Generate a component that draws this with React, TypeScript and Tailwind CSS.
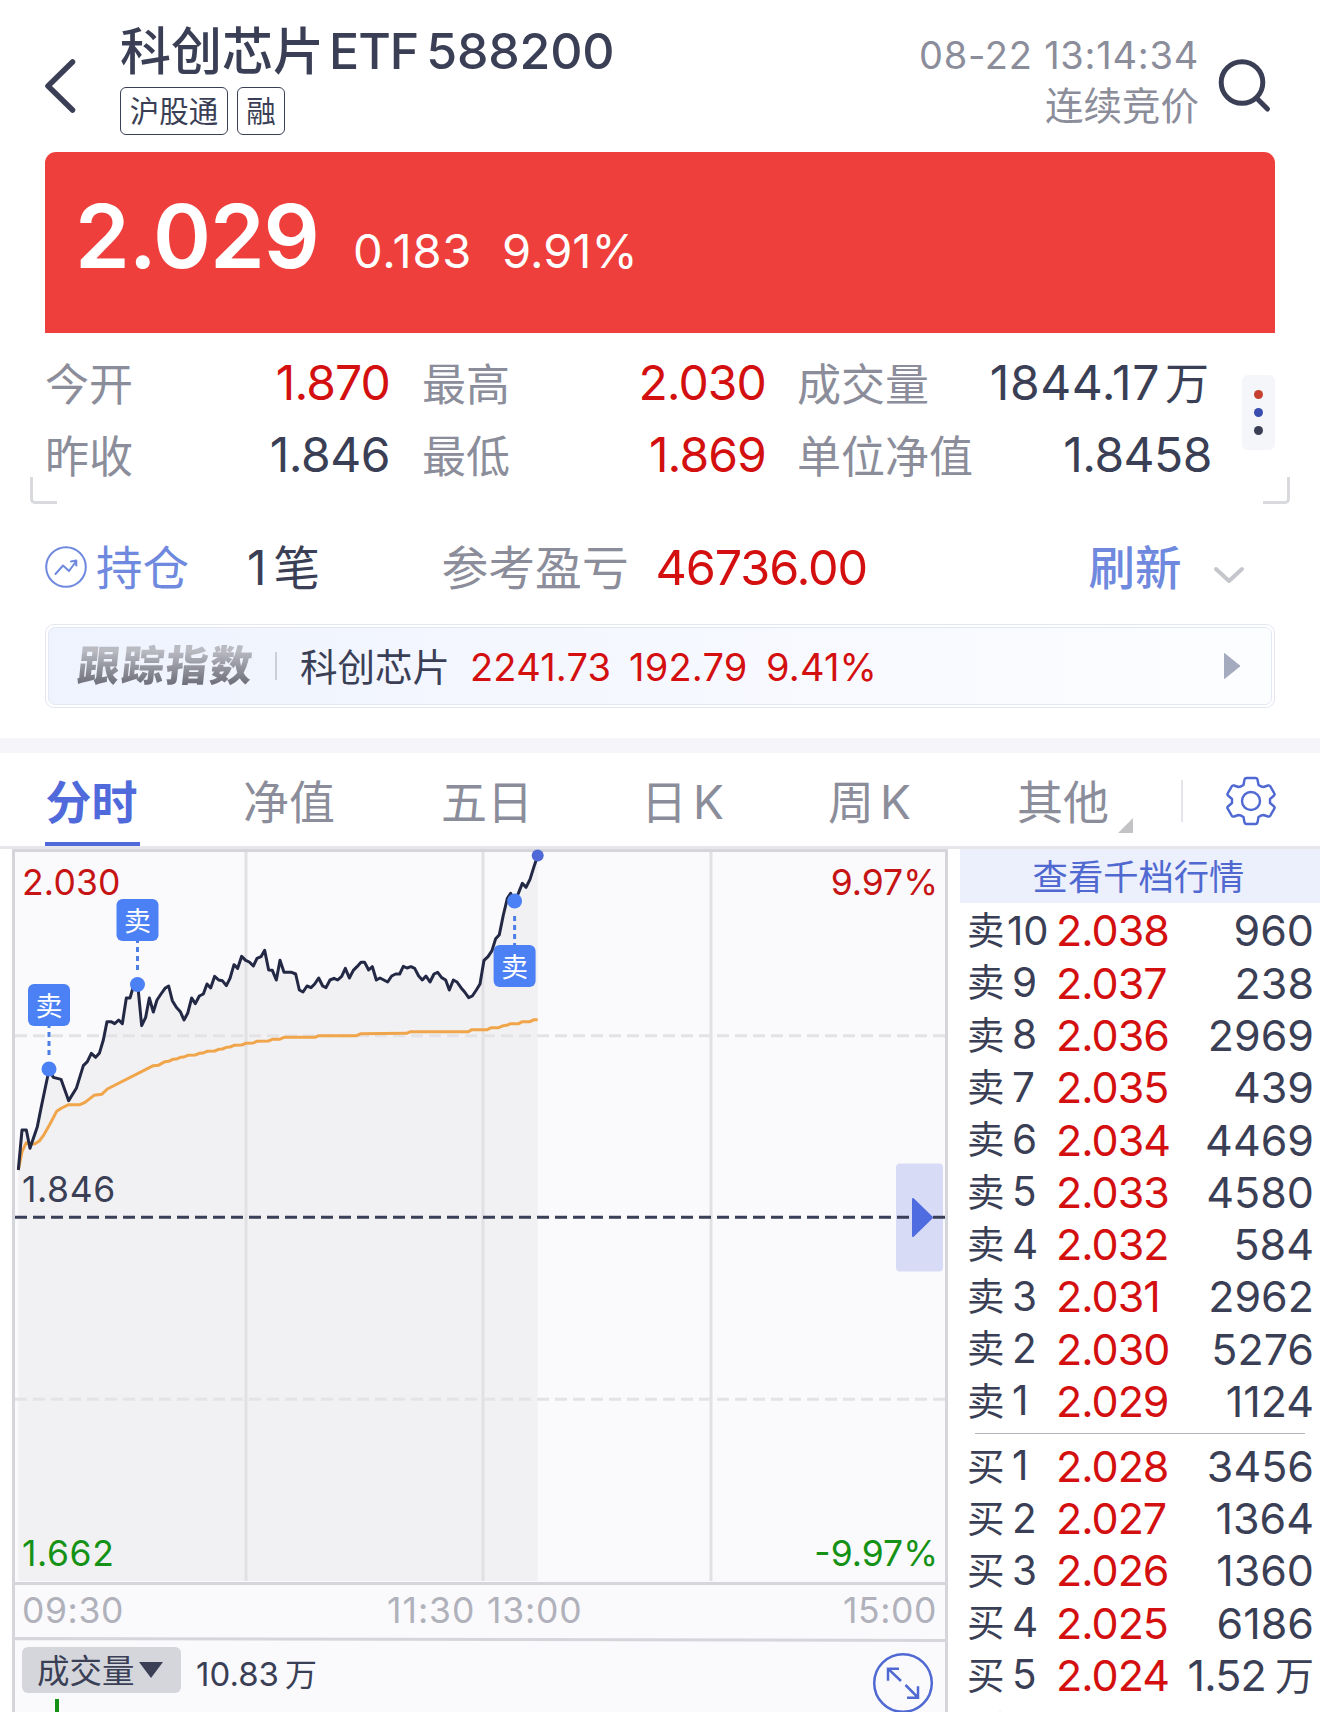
const TABS = [
  { label: "净值", className: "w-[198px]" },
  { label: "五日", className: "w-[200px]" },
  { label: "日 K", className: "w-[187px]" },
  { label: "周 K", className: "w-[189px]" },
];

const ASKS = [
  ["10", "2.038", "960"],
  ["9", "2.037", "238"],
  ["8", "2.036", "2969"],
  ["7", "2.035", "439"],
  ["6", "2.034", "4469"],
  ["5", "2.033", "4580"],
  ["4", "2.032", "584"],
  ["3", "2.031", "2962"],
  ["2", "2.030", "5276"],
  ["1", "2.029", "1124"],
];

const BIDS = [
  ["1", "2.028", "3456"],
  ["2", "2.027", "1364"],
  ["3", "2.026", "1360"],
  ["4", "2.025", "6186"],
  ["5", "2.024", "1.52 万"],
  ["6", "2.023", "1840"],
];

// chart series, three units per pixel
const PRICE_LINE =
  "55,990 66,870 79,870 90,925 112,860 124,800 147,690 160,712 183,718 206,782 229,745 250,677 262,665 274,640 287,652 298,640 310,600 321,545 333,545 344,551 356,540 367,551 379,474 390,474 400,440 413,432 425,557 437,532 448,474 460,516 471,480 483,462 495,445 506,438 517,482 529,502 541,515 552,540 563,520 575,474 586,491 598,468 610,462 621,432 632,444 644,409 656,420 667,422 679,437 690,415 702,374 713,385 725,349 737,361 748,366 760,378 771,355 783,350 794,331 806,390 817,391 829,420 840,361 852,397 875,397 887,402 898,450 909,456 921,438 933,443 944,432 956,414 968,438 978,443 990,420 1002,415 1013,420 1025,409 1036,385 1048,414 1060,391 1071,380 1083,367 1094,367 1106,390 1117,380 1129,420 1140,414 1163,426 1175,408 1187,402 1199,402 1210,379 1221,384 1233,380 1244,385 1256,408 1267,420 1278,408 1290,426 1302,402 1313,397 1325,413 1337,420 1348,450 1360,420 1371,426 1383,443 1394,456 1406,473 1417,468 1429,450 1440,432 1452,361 1464,350 1476,332 1487,296 1498,284 1510,225 1522,175 1532,160 1544,183 1555,160 1567,130 1578,142 1590,118 1602,80 1613,47";

const AVERAGE_LINE =
  "55,990 66,935 79,908 90,912 105,911 118,903 130,887 150,852 170,814 185,804 206,794 240,794 255,787 282,766 305,763 322,747 460,677 475,676 495,665 506,664 518,658 530,657 541,652 552,651 563,646 586,645 598,640 610,639 621,634 644,633 656,628 667,627 679,622 690,621 702,616 725,615 737,610 760,609 770,604 805,603 817,598 838,598 852,592 945,592 956,587 1070,587 1083,581 1220,580 1232,575 1405,575 1416,569 1462,569 1474,563 1496,563 1510,557 1520,556 1532,551 1556,551 1567,545 1590,545 1602,539 1613,539";

export default function App() {
  return (
    <main className="flex h-[1712px] w-[1320px] flex-col overflow-hidden bg-white font-['Inter','Noto_Sans_CJK_SC',sans-serif] text-[#3a3f56]">
      <Header />
      <PriceBanner />
      <Stats />
      <Position />
      <IndexBar />
      <div className="mt-[30px] h-[15px] shrink-0 bg-[#f5f5fa]" />
      <Tabs />
      <div className="flex h-[863px] shrink-0">
        <Chart />
        <OrderBook />
      </div>
    </main>
  );
}

function Header() {
  return (
    <header className="flex h-[152px] shrink-0">
      <svg
        viewBox="0 0 40 60"
        fill="none"
        aria-hidden="true"
        className="mt-[56px] ml-[40px] h-[60px] w-[40px]"
      >
        <path
          d="M32.5 6 8 30l24.5 24"
          stroke="#3a3f56"
          strokeWidth="5.5"
          strokeLinecap="round"
          strokeLinejoin="round"
        />
      </svg>
      <div className="ml-[40px] w-[760px]">
        <h1 className="mt-[21px] flex h-[60px] items-center text-[50px] leading-[60px] font-medium whitespace-nowrap">
          <span className="pt-[2px] text-[51px]">科创芯片</span>
          <span className="ml-[5px] tracking-[-1px]">ETF</span>
          <span className="ml-[8px] tracking-[-0.2px]">588200</span>
        </h1>
        <div className="mt-[6px] flex gap-[9px] text-[29.5px] leading-[47px]">
          <span className="h-[48px] w-[108px] rounded-[6px] border-[1.5px] border-[#3a3f56] text-center">
            沪股通
          </span>
          <span className="h-[48px] w-[48px] rounded-[6px] border-[1.5px] border-[#3a3f56] text-center">
            融
          </span>
        </div>
      </div>
      <div className="flex w-[319px] flex-col items-end text-[#8b8d9a]">
        <span className="mt-[30px] text-[38px] leading-[50px] tracking-[0.75px] whitespace-nowrap">
          08-22 13:14:34
        </span>
        <span className="mt-px text-[38.500px] leading-[50px]">连续竞价</span>
      </div>
      <svg
        viewBox="0 0 60 60"
        fill="none"
        aria-hidden="true"
        className="mt-[56px] ml-[16px] size-[60px]"
      >
        <g stroke="#3a3f56" strokeWidth="5" strokeLinecap="round">
          <circle cx="27" cy="26.500" r="20.800" />
          <path d="m41.500 42 11 11" />
        </g>
      </svg>
    </header>
  );
}

function PriceBanner() {
  return (
    <section className="mx-[45px] flex h-[181px] shrink-0 items-baseline rounded-t-[11px] bg-[#ee3f3c] pt-[30px] pl-[30px] text-[47px] whitespace-nowrap text-white">
      <span className="w-[278px] text-[88px] leading-[108px] font-semibold tracking-[-1.2px]">
        2.029
      </span>
      <span className="w-[149px] tracking-[0.8px]">0.183</span>
      <span>9.91%</span>
    </section>
  );
}

function Stat({
  label,
  value,
  red = false,
}: {
  label: string;
  value: string;
  red?: boolean;
}) {
  return (
    <div className="flex h-[72px] items-center justify-between whitespace-nowrap">
      <span className="pt-[3px] text-[44px] text-[#8b8d9a]">{label}</span>
      <span
        className={
          red
            ? "text-[48px] tracking-[-0.9px] text-[#d30f0f]"
            : "text-[48px] tracking-[-0.5px] text-[#3a3f56]"
        }
      >
        {value}
      </span>
    </div>
  );
}

function Stats() {
  return (
    <section className="relative flex h-[171px] shrink-0 px-[45px] pt-[14px]">
      <div className="w-[345px]">
        <Stat label="今开" value="1.870" red />
        <Stat label="昨收" value="1.846" />
      </div>
      <div className="ml-[32px] w-[344px]">
        <Stat label="最高" value="2.030" red />
        <Stat label="最低" value="1.869" red />
      </div>
      <div className="ml-[31px] w-[415px]">
        <div className="flex h-[72px] items-center whitespace-nowrap">
          <span className="pt-[3px] text-[44px] text-[#8b8d9a]">成交量</span>
          <span className="ml-auto text-[48px] tracking-[0.6px]">1844.17</span>
          <span className="mr-[3px] ml-[5px] pt-[2px] text-[44px]">万</span>
        </div>
        <Stat label="单位净值" value="1.8458" />
      </div>
      <div className="mt-[28px] ml-[30px] flex h-[75px] w-[33px] flex-col items-center justify-center gap-[9px] rounded-[6px] bg-[#f4f6f9]">
        <span className="size-[9px] rounded-full bg-[#c6402f]" />
        <span className="size-[9px] rounded-full bg-[#3a4eb0]" />
        <span className="size-[9px] rounded-full bg-[#3a3f56]" />
      </div>
      <span className="absolute bottom-0 left-[30px] h-[27px] w-[27px] rounded-bl-[5px] border-b-[3px] border-l-[3px] border-[#d9dade]" />
      <span className="absolute right-[30px] bottom-0 h-[27px] w-[27px] rounded-br-[5px] border-r-[3px] border-b-[3px] border-[#d9dade]" />
    </section>
  );
}

function Position() {
  return (
    <section className="flex h-[120px] shrink-0 items-center pt-[6px] pl-[45px] text-[46.500px] whitespace-nowrap">
      <svg
        viewBox="0 0 42 42"
        fill="none"
        aria-hidden="true"
        className="size-[42px]"
      >
        <g
          stroke="#6f89de"
          strokeWidth="2"
          strokeLinecap="round"
          strokeLinejoin="round"
        >
          <circle cx="21" cy="21" r="19.8" />
          <path d="m10.5 28 7.5-8.500 6 5.500L31 15.500M26 15.500l5.300-1v5" />
        </g>
      </svg>
      <span className="ml-[9px] w-[151px] pt-[3px] text-[#6f89de]">持仓</span>
      <span className="pt-[2px] text-[48px]">1</span>
      <span className="ml-[7px] w-[168px] pt-[3px]">笔</span>
      <span className="w-[214px] pt-[3px] text-[46.800px] text-[#8b8d9a]">
        参考盈亏
      </span>
      <span className="w-[433px] pt-[2px] text-[48.500px] tracking-[-1.1px] text-[#d30f0f]">
        46736.00
      </span>
      <span className="pt-[3px] font-medium text-[#6f89de]">刷新</span>
      <svg
        viewBox="0 0 32 18"
        fill="none"
        aria-hidden="true"
        className="mt-[15px] ml-[31px] h-[18px] w-[32px]"
      >
        <path
          d="m3 3 13 12L29 3"
          stroke="#c5c6cc"
          strokeWidth="4"
          strokeLinecap="round"
          strokeLinejoin="round"
        />
      </svg>
    </section>
  );
}

function IndexBar() {
  return (
    <section className="mx-[45px] h-[84px] shrink-0 rounded-[9px] border border-[#e3e7f2] p-[2px]">
      <div className="flex h-full items-center rounded-[7px] border border-[#e3e8f5] bg-linear-to-r from-[#eff3fe] to-[#fcfdff] pl-[29px] text-[38px] whitespace-nowrap text-[#d30f0f]">
        <span className="w-[197px] -skew-x-6 bg-linear-to-b from-[#b9bac2] from-25% to-[#6f707b] to-80% bg-clip-text text-[42px] leading-[60px] font-black tracking-[2px] text-transparent">
          跟踪指数
        </span>
        <span className="h-[28px] w-[2px] bg-[#cdcfd6]" />
        <span className="ml-[23px] w-[170px] pt-[4px] text-[37.500px] text-[#3a3f56]">
          科创芯片
        </span>
        <span className="w-[159px] pt-[2px] tracking-[0.2px]">2241.73</span>
        <span className="w-[137px] pt-[2px] tracking-[0.2px]">192.79</span>
        <span className="pt-[2px] tracking-[0.2px]">9.41%</span>
        <svg
          viewBox="0 0 18 28"
          aria-hidden="true"
          className="mr-[30px] ml-auto h-[28px] w-[18px]"
        >
          <path
            d="M1.500 1.500v25L17 14z"
            fill="#a5abbf"
            stroke="#a5abbf"
            strokeLinejoin="round"
          />
        </svg>
      </div>
    </section>
  );
}

function Tabs() {
  return (
    <nav className="flex h-[96px] shrink-0 border-b-[3px] border-[#e7e7eb] pl-[45px] text-[46px] leading-[99px] whitespace-nowrap text-[#8b8d9a]">
      <span className="h-[93px] w-[95px] border-b-[4px] border-[#5069db] pr-[2px] text-center font-bold text-[#5069db]">
        分时
      </span>
      <div className="ml-[103px] flex [word-spacing:-7px]">
        {TABS.map((tab) => (
          <span key={tab.label} className={tab.className}>
            {tab.label}
          </span>
        ))}
      </div>
      <span className="w-[93px]">其他</span>
      <svg
        viewBox="0 0 15 15"
        aria-hidden="true"
        className="mt-[65px] ml-[8px] size-[15px]"
      >
        <path d="M15 0v15H0z" fill="#c3c3c6" />
      </svg>
      <span className="mt-[27px] ml-[48px] h-[42px] w-[1.500px] bg-[#e4e5ea]" />
      <svg
        viewBox="-26 -26 52 52"
        fill="none"
        aria-hidden="true"
        className="mt-[22px] ml-[42px] size-[52px]"
      >
        <g stroke="#5069d2" strokeWidth="2.400" strokeLinejoin="round">
          <path d="M-4.500-23h9q1.500 0 2 1.500L7.500-16q3 2 5 2l4.500-1.500q1.500-.5 2.300.8l4 7q.8 1.200-.3 2.200L19-2v4l4 3.500q1.100 1 .3 2.200l-4 7q-.8 1.300-2.300.8L12.500 14q-2 0-5 2l-1 5.500q-.5 1.500-2 1.500h-9q-1.500 0-2-1.500l-1-5.500q-3-2-5-2l-4.500 1.500q-1.500.5-2.300-.8l-4-7q-.8-1.200.3-2.200L-19 2v-4l-4-3.500q-1.100-1-.3-2.200l4-7q.8-1.300 2.300-.8l4.500 1.500q2 0 5-2l1-5.500q.5-1.500 2-1.500z" />
          <circle r="9" />
        </g>
      </svg>
    </nav>
  );
}

function Marker({ x, y, boxY }: { x: number; y: number; boxY: number }) {
  const below = boxY > y;
  return (
    <g>
      <path
        d={below ? `M${x} ${boxY}V${y + 14}` : `M${x} ${boxY + 42}V${y - 14}`}
        stroke="#4c7fe6"
        strokeWidth="3"
        strokeDasharray="5 4"
        strokeDashoffset="3"
      />
      <circle cx={x} cy={y} r="7.500" fill="#4c80f5" />
      <rect x={x - 21} y={boxY} width="42" height="42" rx="6" fill="#4c80f5" />
      <text
        x={x}
        y={boxY + 31.500}
        textAnchor="middle"
        fontSize="27"
        fill="#fff"
      >
        卖
      </text>
    </g>
  );
}

function Chart() {
  return (
    <section className="relative ml-[12px] flex w-[936px] shrink-0 flex-col bg-[#fafafd] text-[35.500px] leading-[36px]">
      <svg
        viewBox="12 849 936 863"
        fill="none"
        aria-hidden="true"
        className="absolute inset-0 h-[863px] w-[936px]"
      >
        <polygon
          points={`55,2223 ${PRICE_LINE} 1613,2223`}
          transform="translate(0 840) scale(.33333)"
          fill="#f1f1f3"
        />
        <path
          d="M246 851v730M483 851v730M711 851v730"
          stroke="#e1e1e4"
          strokeWidth="3"
        />
        <path
          d="M15 1035.700h930M15 1399.300h930"
          stroke="#e3e3e6"
          strokeWidth="3"
          strokeDasharray="12 6"
        />
        <path
          d="M13.500 1712V850.500h933V1712M15 1583.500h930M15 1638.500l930 2"
          stroke="#d5d6db"
          strokeWidth="3"
        />
        <rect x="896" y="1163.500" width="47" height="108" rx="4" fill="#d7dbf6" />
        <path
          d="M15 1217.300h930"
          stroke="#3a3f58"
          strokeWidth="3"
          strokeDasharray="12 6"
        />
        <path
          d="M913 1199v37l19-18.500z"
          fill="#4f6ce0"
          stroke="#4f6ce0"
          strokeWidth="2"
          strokeLinejoin="round"
        />
        <g
          transform="translate(0 840) scale(.33333)"
          strokeWidth="9"
          strokeLinejoin="round"
        >
          <polyline points={AVERAGE_LINE} stroke="#f0a54a" />
          <polyline points={PRICE_LINE} stroke="#232845" />
        </g>
        <Marker x={49} y={1069} boxY={984} />
        <Marker x={137.5} y={984.5} boxY={899} />
        <Marker x={514.600} y={901} boxY={945} />
        <circle cx="537.700" cy="855.500" r="6" fill="#4f69d8" />
        <path d="M57 1699v13" stroke="#159215" strokeWidth="4" />
      </svg>

      <div className="relative flex h-[733px] flex-col pr-[10px] pl-[10px]">
        <div className="mt-[16px] flex justify-between text-[#c61414]">
          <span className="tracking-[0.2px]">2.030</span>
          <span>9.97%</span>
        </div>
        <span className="mt-[271px] tracking-[0.6px]">1.846</span>
        <div className="mt-auto mb-[10px] flex justify-between text-[#159215]">
          <span className="tracking-[0.6px]">1.662</span>
          <span>-9.97%</span>
        </div>
      </div>
      <div className="relative flex h-[57px] items-center pt-px pr-[11px] pl-[10px] tracking-[0.6px] text-[#b0b1ba]">
        <span className="w-[365px]">09:30</span>
        <span className="w-[100px] tracking-[1px]">11:30</span>
        <span className="tracking-[0.8px]">13:00</span>
        <span className="ml-auto">15:00</span>
      </div>
      <div className="relative flex h-[73px] items-start pl-[10px]">
        <button
          type="button"
          className="mt-[8px] flex h-[46px] w-[159px] items-center rounded-[6px] bg-[#d5d6dc] pl-[15px] text-[32.500px]"
        >
          <span className="pt-[4px]">成交量</span>
          <svg
            viewBox="0 0 24 16"
            aria-hidden="true"
            className="ml-[4px] h-[16px] w-[24px]"
          >
            <path d="M0 0h24L12 16z" fill="#3a3f56" />
          </svg>
        </button>
        <span className="mt-[17px] ml-[15px] text-[33px]">10.83</span>
        <span className="mt-[18px] ml-[6px] text-[32px]">万</span>
        <svg
          viewBox="-31 -31 62 62"
          fill="none"
          aria-hidden="true"
          className="absolute top-[13px] right-[14px] size-[62px]"
        >
          <g stroke="#5069d2" strokeWidth="2.500">
            <circle r="28.800" />
            <path d="M-4-14.300h-11v12M-15-14.300-2-2M4 14.700h11v-11.500M15 14.700 2.500 2" />
          </g>
        </svg>
      </div>
    </section>
  );
}

function BookRow({ side, row }: { side: string; row: string[] }) {
  const [level, price, volume] = row;
  const [amount, unit] = volume.split(" ");
  return (
    <div className="flex h-[52.300px] items-center text-[43px] whitespace-nowrap">
      <span className="w-[38px] pt-px text-[37.500px]">{side}</span>
      <span
        className={
          level.length > 1
            ? "w-[51px] pt-px pl-[2px] text-[40px]"
            : "w-[51px] pt-px pl-[7px] text-[40.500px]"
        }
      >
        {level}
      </span>
      <span className="tracking-[-1px] text-[#d30f0f]">{price}</span>
      <span className={unit ? "ml-auto tracking-[-0.8px]" : "ml-auto"}>
        {amount}
      </span>
      {unit && <span className="ml-[9px] pt-px text-[39px]">{unit}</span>}
    </div>
  );
}

function OrderBook() {
  return (
    <aside className="ml-[12px] w-[360px]">
      <div className="h-[54px] bg-[#eceffc] pr-[3px] text-center text-[35.300px] leading-[57px] text-[#5069d0]">
        查看千档行情
      </div>
      <div className="pt-[1.500px] pr-[6px] pl-[7px]">
        {ASKS.map((row) => (
          <BookRow key={row[0]} side="卖" row={row} />
        ))}
      </div>
      <div className="mt-[5.500px] mr-[15px] mb-[6px] ml-[15px] h-px bg-[#b3b4ba]" />
      <div className="pr-[6px] pl-[7px]">
        {BIDS.map((row) => (
          <BookRow key={row[0]} side="买" row={row} />
        ))}
      </div>
    </aside>
  );
}
